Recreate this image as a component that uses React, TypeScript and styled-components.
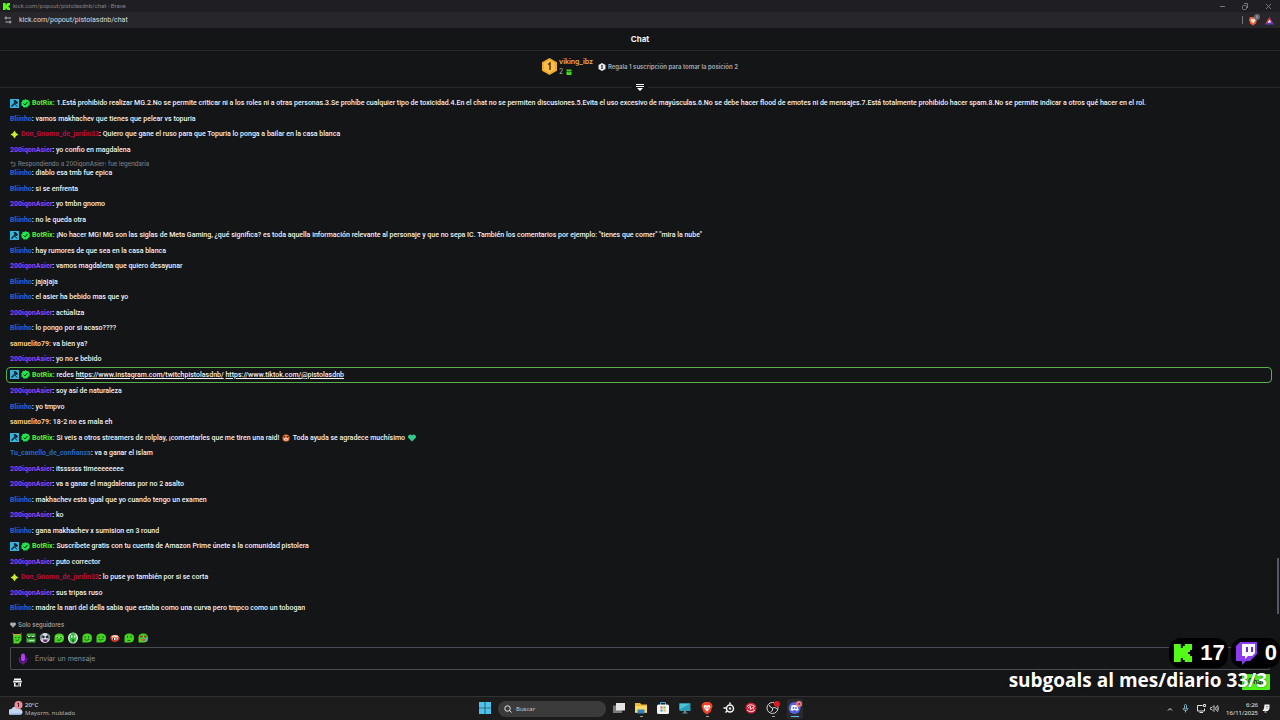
import React from "react";
import styled, { createGlobalStyle } from "styled-components";

const GlobalStyle = createGlobalStyle`
  * { box-sizing: border-box; }
  body { margin: 0; background: #141517; }
  button, input { font: inherit; color: inherit; border: 0; background: none; padding: 0; margin: 0; }
  svg { display: block; flex: none; }
`;

const Page = styled.div`
  position: relative;
  display: flex;
  flex-direction: column;
  min-height: 100vh;
  background: #141517;
  color: #f2f2f3;
  font-family: Inter, "Liberation Sans", sans-serif;
  font-size: 7px;
  line-height: 10px;
`;

/* ---------- browser window ---------- */

const TitleBar = styled.header`
  display: flex;
  align-items: center;
  gap: 3px;
  height: 12px;
  padding: 0 8px 0 3px;
  background: #1f1e22;
  color: #828286;
  font-family: Roboto, sans-serif;
  font-size: 6px;
`;

const WindowButtons = styled.div`
  display: flex;
  gap: 15px;
  margin-left: auto;
`;

const WindowButton = styled.button`
  width: 8px;
  height: 8px;
  color: #77777b;
`;

const AddressBar = styled.div`
  display: flex;
  align-items: center;
  gap: 7px;
  height: 16px;
  padding: 0 6px 0 4px;
  background: #27272b;
  color: #dcdcdf;
  font-family: Roboto, sans-serif;
`;

const AddressInput = styled.input`
  flex: 1;
  min-width: 0;
  height: 12px;
  font-size: 7px;
  outline: 0;
`;

const Extensions = styled.div`
  display: flex;
  align-items: center;
  gap: 5px;
  height: 8px;
  padding-left: 5px;
  border-left: 1px solid #77777b;
`;

/* ---------- chat head ---------- */

const ChatTitle = styled.h1`
  display: flex;
  align-items: center;
  justify-content: center;
  height: 23px;
  margin: 0;
  border-bottom: 1px solid #26282b;
  font-size: 8px;
  font-weight: 700;
`;

const Leaderboard = styled.section`
  display: flex;
  align-items: center;
  justify-content: center;
  gap: 5px;
  height: 31px;
`;

const Leader = styled.div`
  display: flex;
  align-items: center;
  gap: 2px;
`;

const LeaderName = styled.div`
  color: #e9ac62;
  font-size: 7px;
  font-weight: 600;
`;

const LeaderCount = styled.div`
  display: flex;
  align-items: center;
  gap: 3px;
  color: #a6abb0;
`;

const GiftHint = styled.div`
  display: flex;
  align-items: center;
  gap: 2px;
  color: #a9adb2;
  font-size: 6px;
  font-weight: 600;
`;

const Collapse = styled.div`
  display: flex;
  align-items: center;
  gap: 4px;
  height: 10px;

  &::before,
  &::after {
    content: "";
    flex: 1;
    height: 1px;
    background: #26282b;
  }
`;

const CollapseButton = styled.button`
  width: 8px;
  height: 8px;
`;

/* ---------- messages ---------- */

const MessageArea = styled.div`
  display: flex;
  flex: 1;
`;

const MessageList = styled.ol`
  display: flex;
  flex: 1;
  flex-direction: column;
  justify-content: space-between;
  min-width: 0;
  margin: 0;
  padding: 6px 6px 1px 10px;
  list-style: none;
`;

const Message = styled.li<{ $pinned?: boolean }>`
  font-family: Roboto, "Liberation Sans", sans-serif;
  font-size: 7px;
  font-weight: 500;
  line-height: 10px;
  ${(p) =>
    p.$pinned &&
    `
    margin: -3px -1px -2px -4px;
    padding: 2px 3px;
    border: 1px solid #5cb04c;
    border-radius: 4px;
  `}
`;

const Quote = styled.div`
  display: flex;
  align-items: center;
  gap: 2px;
  height: 8px;
  color: #7b7e82;
  font-family: Inter, sans-serif;
  font-size: 6px;
  font-weight: 500;
  line-height: 8px;
`;

const Line = styled.div`
  display: flex;
  align-items: center;
  gap: 2px;
  min-height: 10px;
`;

const Body = styled.span`
  white-space: pre-wrap;
`;

const User = styled.span<{ $color: string }>`
  color: ${(p) => p.$color};
  font-weight: 700;
`;

const Colon = styled.span<{ $color?: string }>`
  color: ${(p) => p.$color || "inherit"};
  font-weight: 700;
`;

const ChatLink = styled.a`
  color: inherit;
  text-decoration: underline;
`;

const Emoji = styled.span`
  display: inline-block;
  margin: 0 1px;
  vertical-align: -2px;
`;

const ScrollTrack = styled.div`
  display: flex;
  align-items: flex-end;
  width: 3px;
`;

const ScrollThumb = styled.div`
  width: 2px;
  height: 56px;
  background: #55585c;
`;

/* ---------- composer ---------- */

const Composer = styled.form`
  display: flex;
  flex-direction: column;
  padding: 5px 10px 6px;
`;

const FollowersOnly = styled.div`
  display: flex;
  align-items: center;
  gap: 2px;
  height: 12px;
  color: #a9acb0;
  font-size: 6px;
  font-weight: 500;
`;

const EmoteBar = styled.div`
  display: flex;
  gap: 2px;
  height: 16px;
  padding: 1px;
`;

const EmoteButton = styled.button`
  width: 12px;
  height: 12px;
`;

const MessageBox = styled.label`
  display: flex;
  align-items: center;
  gap: 7px;
  height: 23px;
  padding: 0 7px;
  border: 1px solid #494d52;
  border-radius: 1px;
`;

const MessageInput = styled.input`
  flex: 1;
  min-width: 0;
  font-size: 7px;
  outline: 0;

  &::placeholder { color: #8b8e92; opacity: 1; }
`;

const ComposerActions = styled.div`
  display: flex;
  align-items: center;
  justify-content: space-between;
  height: 16px;
  margin-top: 4px;
  padding-left: 3px;
`;

const ShopButton = styled.button`
  width: 9px;
  height: 9px;
`;

const SendButton = styled.button`
  width: 28px;
  height: 16px;
  border-radius: 1px;
  background: #4df51a;
  color: #14301a;
  font-size: 7px;
  font-weight: 600;
`;

/* ---------- stream overlay ---------- */

const Overlay = styled.aside`
  position: absolute;
  right: 0;
  bottom: 27px;
  display: flex;
  flex-direction: column;
  align-items: flex-end;
  pointer-events: none;
`;

const Counters = styled.div`
  display: flex;
  gap: 3px;
`;

const Counter = styled.div`
  display: flex;
  align-items: center;
  gap: 8px;
  height: 30px;
  padding: 0 3px 0 5px;
  border-radius: 12px;
  background: #000;
  color: #fff;
  font-family: "Liberation Sans", sans-serif;
  font-size: 22px;
  font-weight: 700;
  line-height: 30px;
`;

const Goal = styled.div`
  padding-right: 13px;
  color: #fff;
  font-family: "Open Sans", sans-serif;
  font-size: 19px;
  font-weight: 700;
  line-height: 25px;
  text-shadow: 0 0 2px #00000099;
`;

/* ---------- taskbar ---------- */

const Taskbar = styled.footer`
  display: grid;
  grid-template-columns: 1fr auto 1fr;
  align-items: center;
  height: 24px;
  border-top: 1px solid #313131;
  background: #1c1c1c;
  color: #e8e8e8;
  font-family: "Noto Sans", sans-serif;
  font-size: 6px;
  line-height: 8px;
`;

const Weather = styled.div`
  display: flex;
  align-items: center;
  gap: 2px;
  padding-left: 9px;
`;

const Dim = styled.div`
  color: #b4b4b4;
`;

const Apps = styled.nav`
  display: flex;
  align-items: center;
  gap: 6px;
`;

const Search = styled.label`
  display: flex;
  align-items: center;
  gap: 4px;
  width: 108px;
  height: 16px;
  margin: 0 -1px;
  padding: 0 6px;
  border-radius: 8px;
  background: #3b3b3b;
  font-size: 7px;
`;

const SearchInput = styled.input`
  width: 80px;
  outline: 0;
  font-size: 6px;
  &::placeholder { color: #c9c9c9; opacity: 1; }
`;

const AppButton = styled.button<{ $active?: boolean; $open?: boolean }>`
  display: flex;
  flex-direction: column;
  align-items: center;
  justify-content: center;
  width: 16px;
  height: 20px;
  border-radius: 2px;
  background: ${(p) => (p.$active ? "#2a2a2c" : "none")};

  &::after {
    content: "";
    width: ${(p) => (p.$active ? 8 : 3)}px;
    height: 1px;
    margin-top: 1px;
    background: ${(p) => (p.$active ? "#5cc0f5" : p.$open ? "#a0a0a0" : "transparent")};
  }
`;

const Tray = styled.div`
  display: flex;
  align-items: center;
  justify-content: flex-end;
  gap: 4px;
  padding-right: 10px;
`;

const TrayButton = styled.button<{ $gap?: number }>`
  margin-right: ${(p) => p.$gap || 0}px;
`;

const Clock = styled.time`
  margin: 0 0 0 3px;
  text-align: right;
`;

/* ---------- drawings ---------- */

const KickLogo = ({ size }: { size: number }) => (
  <svg width={size} height={size} viewBox="0 0 9 9" fill="#53fc18">
    <path d="M0 0h3.400v2h1V1h1V0H9v3H8v1H7v1h1v1h1v3H5.400V8h-1V7h-1v2H0z" />
  </svg>
);

const TwitchLogo = () => (
  <svg width="21" height="23" viewBox="0 0 21 23">
    <path d="M4 0h17v12l-7 7h-4l-4 4v-4H0V4z" fill="#8b3cf0" />
    <path d="M6 2h13v9l-3 3h-4l-3 3v-3H6z" fill="#fff" />
    <path d="M10 5h2v5h-2zM15 5h2v5h-2z" fill="#6f2bd0" />
  </svg>
);

const ModBadge = () => (
  <svg width="9" height="9" viewBox="0 0 18 18">
    <rect width="18" height="18" fill="#35b3dc" />
    <path d="M7 3l4-1 5 5-2 3-3-1-7 7-2-2 7-7z" fill="#10222c" />
    <path d="M10 10l4 5" stroke="#10222c" strokeWidth="2" />
  </svg>
);

const VerifiedBadge = () => (
  <svg width="9" height="9" viewBox="0 0 18 18">
    <path
      d="M9 0l2.500 2 3.200-.6 1 3.200L18 7l-1 2.500.5 3-3 1.200L12.500 17 9 16.500 5.500 17.500l-1.800-3L.5 13l.8-3.300L0 7l2.500-2L3.300 1.500l3.300.4z"
      fill="#1fe648"
    />
    <path d="M5 9l3 3 5-6" fill="none" stroke="#0c2c14" strokeWidth="2" />
  </svg>
);

const VipBadge = () => (
  <svg width="9" height="9" viewBox="0 0 18 18">
    <path d="M9 1l3 5 5 3-5 3-3 5-3-5-5-3 5-3z" fill="#c6ef2c" />
  </svg>
);

const StarEyes = () => (
  <svg width="8" height="8" viewBox="0 0 16 16">
    <circle cx="8" cy="8" r="7" fill="#f0803a" />
    <path d="M2 4h5l-2 4zM9 4h5l-3 4z" fill="#7a1c20" />
    <path d="M4 9h8a4 4 0 0 1-8 0z" fill="#fff" />
    <path d="M5 11h6a4 3 0 0 1-6 0z" fill="#b0202c" />
  </svg>
);

const GreenHeart = () => (
  <svg width="8" height="8" viewBox="0 0 16 16">
    <path d="M8 15L1 8a4.200 4.200 0 0 1 7-5 4.200 4.200 0 0 1 7 5z" fill="#2fc98a" />
  </svg>
);

const Blob = ({ children, base = "#45d51e" }: { children?: React.ReactNode; base?: string }) => (
  <svg width="12" height="12" viewBox="0 0 24 24">
    <path d="M3 11C3 5 7 3 13 3s9 3 9 9-3 9-9 9H3z" fill={base} />
    {children}
  </svg>
);

const dark = "#1c6a1c";

const emotes: { name: string; art: React.ReactNode }[] = [
  {
    name: "Angel",
    art: (
      <svg width="12" height="12" viewBox="0 0 24 24">
        <path d="M4 5h17v11l-5 7H5z" fill="#45d51e" />
        <path d="M2 1l4 3h12l4-3-3 5H5z" fill="#d89a4a" />
        <path d="M8 11h3M14 11h4M9 16q4 3 7-1" stroke={dark} strokeWidth="2" fill="none" />
      </svg>
    ),
  },
  {
    name: "Cool",
    art: (
      <svg width="12" height="12" viewBox="0 0 24 24">
        <path d="M4 3h17v18H3V8z" fill="#45b53a" />
        <path d="M3 8h18v5H5z" fill="#17361c" />
        <path d="M6 9h5M13 9h6M8 17h10" stroke="#c8e9cc" strokeWidth="2" />
      </svg>
    ),
  },
  {
    name: "Clown",
    art: (
      <svg width="12" height="12" viewBox="0 0 24 24">
        <circle cx="12" cy="12" r="10" fill="#d9dce6" />
        <path d="M1 8l5-5 3 5-5 8zM23 8l-5-5-3 5 5 8z" fill="#6c8f86" />
        <circle cx="9" cy="10" r="2.500" fill="#29243c" />
        <circle cx="16" cy="10" r="2.500" fill="#29243c" />
        <path d="M7 15h11l-3 5h-5z" fill="#6a2d66" />
      </svg>
    ),
  },
  {
    name: "Smirk",
    art: (
      <Blob>
        <path d="M6 9h5v3H6zM13 9h6v3h-6z" fill="#c6f7b4" />
        <path d="M7 11h3M14 11h4M8 16q4 2 8-1" stroke={dark} strokeWidth="2" fill="none" />
      </Blob>
    ),
  },
  {
    name: "Shock",
    art: (
      <svg width="12" height="12" viewBox="0 0 24 24">
        <ellipse cx="12" cy="12" rx="10" ry="11" fill="#dff3e2" />
        <ellipse cx="12" cy="12" rx="7" ry="10" fill="#2fbf3a" />
        <path d="M8 7h3v4H8zM14 7h3v4h-3z" fill="#fff" />
        <ellipse cx="12" cy="17" rx="2" ry="3" fill={dark} />
      </svg>
    ),
  },
  {
    name: "Happy",
    art: (
      <Blob>
        <path d="M8 8v4M15 8v4M7 15q5 4 10-1" stroke={dark} strokeWidth="2" fill="none" />
      </Blob>
    ),
  },
  {
    name: "Calm",
    art: (
      <Blob>
        <path d="M6 10h4M14 10h4M7 15q5 3 10-1" stroke={dark} strokeWidth="2" fill="none" />
      </Blob>
    ),
  },
  {
    name: "Mouth",
    art: (
      <svg width="12" height="12" viewBox="0 0 24 24">
        <path d="M2 12q3-8 9-6 7-2 11 6-3 8-10 8T2 12z" fill="#c93a28" />
        <path d="M4 9q8-6 16 0l-3 2H7z" fill="#f3d9c0" />
        <path d="M6 12h12l-2 4H8z" fill="#fff" />
        <path d="M9 12v4M14 12v4" stroke="#401414" strokeWidth="2" />
      </svg>
    ),
  },
  {
    name: "Think",
    art: (
      <Blob>
        <path d="M9 7v5M16 7v5M9 17h6" stroke={dark} strokeWidth="2" fill="none" />
      </Blob>
    ),
  },
  {
    name: "Tears",
    art: (
      <Blob>
        <path d="M6 7h5v4H6zM14 7h5v4h-5z" fill="#7c4a1c" />
        <path d="M9 14h8l-2 4h-4z" fill="#e04a4a" />
        <path d="M17 13h4v5h-4z" fill="#3aa9e8" />
      </Blob>
    ),
  },
];

/* ---------- data ---------- */

const colors = {
  BotRix: "#4ff03a",
  Bliinho: "#2566c8",
  "200iqonAsier": "#9744ee",
  samuelito79: "#f0c88c",
  Don_Gnomo_de_jardin33: "#b80d3c",
  Tu_camello_de_confianza: "#2566c0",
};

type Name = keyof typeof colors;
type Entry = { user: Name; text: React.ReactNode; reply?: string; pinned?: boolean };

const B: Name = "Bliinho";
const A: Name = "200iqonAsier";
const R: Name = "BotRix";
const S: Name = "samuelito79";
const D: Name = "Don_Gnomo_de_jardin33";

const messages: Entry[] = [
  {
    user: R,
    text: "1.Está prohibido realizar MG.2.No se permite criticar ni a los roles ni a otras personas.3.Se prohíbe cualquier tipo de toxicidad.4.En el chat no se permiten discusiones.5.Evita el uso excesivo de mayúsculas.6.No se debe hacer flood de emotes ni de mensajes.7.Está totalmente prohibido hacer spam.8.No se permite indicar a otros qué hacer en el rol.",
  },
  { user: B, text: "vamos makhachev que tienes que pelear vs topuria" },
  { user: D, text: "Quiero que gane el ruso para que Topuria lo ponga a bailar en la casa blanca" },
  { user: A, text: "yo confio en magdalena" },
  { user: B, text: "diablo esa tmb fue epica", reply: "Respondiendo a 200iqonAsier: fue legendaria" },
  { user: B, text: "si se enfrenta" },
  { user: A, text: "yo tmbn gnomo" },
  { user: B, text: "no le queda otra" },
  {
    user: R,
    text: '¡No hacer MG! MG son las siglas de Meta Gaming, ¿qué significa? es toda aquella información relevante al personaje y que no sepa IC. También los comentarios por ejemplo: "tienes que comer" "mira la nube"',
  },
  { user: B, text: "hay rumores de que sea en la casa blanca" },
  { user: A, text: "vamos magdalena que quiero desayunar" },
  { user: B, text: "jajajaja" },
  { user: B, text: "el asier ha bebido mas que yo" },
  { user: A, text: "actúaliza" },
  { user: B, text: "lo pongo por si acaso????" },
  { user: S, text: "va bien ya?" },
  { user: A, text: "yo no e bebido" },
  {
    user: R,
    pinned: true,
    text: (
      <>
        redes{" "}
        <ChatLink href="https://www.instagram.com/twitchpistolasdnb/">
          https://www.instagram.com/twitchpistolasdnb/
        </ChatLink>{" "}
        <ChatLink href="https://www.tiktok.com/@pistolasdnb">https://www.tiktok.com/@pistolasdnb</ChatLink>
      </>
    ),
  },
  { user: A, text: "soy así de naturaleza" },
  { user: B, text: "yo tmpvo" },
  { user: S, text: "18-2 no es mala eh" },
  {
    user: R,
    text: (
      <>
        Si veis a otros streamers de rolplay, ¡comentarles que me tiren una raid!{" "}
        <Emoji><StarEyes /></Emoji> Toda ayuda se agradece muchísimo <Emoji><GreenHeart /></Emoji>
      </>
    ),
  },
  { user: "Tu_camello_de_confianza", text: "va a ganar el islam" },
  { user: A, text: "itssssss timeeeeeeee" },
  { user: A, text: "va a ganar el magdalenas por no 2 asalto" },
  { user: B, text: "makhachev esta igual que yo cuando tengo un examen" },
  { user: A, text: "ko" },
  { user: B, text: "gana makhachev x sumision en 3 round" },
  { user: R, text: "Suscríbete gratis con tu cuenta de Amazon Prime únete a la comunidad pistolera" },
  { user: A, text: "puto corrector" },
  { user: D, text: "lo puse yo también por si se corta" },
  { user: A, text: "sus tripas ruso" },
  { user: B, text: "madre la nari del della sabia que estaba como una curva pero tmpco como un tobogan" },
];

const ChatMessage = ({ user, text, reply, pinned }: Entry) => (
  <Message $pinned={pinned}>
    {reply && (
      <Quote>
        <svg width="6" height="6" viewBox="0 0 12 12" fill="none" stroke="currentColor" strokeWidth="1.500">
          <path d="M4 1L1.500 3.500 4 6M2 3.500h8V10H3" />
        </svg>
        {reply}
      </Quote>
    )}
    <Line>
      {user === R && <ModBadge />}
      {user === R && <VerifiedBadge />}
      {user === D && <VipBadge />}
      <Body>
        <User $color={colors[user]}>{user}</User>
        <Colon $color={user === R || user === S ? colors[user] : undefined}>:</Colon> {text}
      </Body>
    </Line>
  </Message>
);

const apps: { name: string; open?: boolean; active?: boolean; art: React.ReactNode }[] = [
  {
    name: "Vista de tareas",
    art: (
      <svg width="14" height="14" viewBox="0 0 28 28">
        <path d="M2 9h18v15H2z" fill="#777" />
        <path d="M8 4h18v15H8z" fill="#e4e4e4" />
      </svg>
    ),
  },
  {
    name: "Explorador",
    open: true,
    art: (
      <svg width="14" height="14" viewBox="0 0 28 28">
        <path d="M2 4h10l3 3h11v17H2z" fill="#f0b93a" />
        <path d="M2 10h24v12H2z" fill="#fbd968" />
        <path d="M7 17h14v8H7z" fill="#2d84c9" />
      </svg>
    ),
  },
  {
    name: "Store",
    art: (
      <svg width="14" height="14" viewBox="0 0 28 28">
        <path d="M9 8V3h10v5" fill="none" stroke="#3ca6dd" strokeWidth="2" />
        <rect x="2" y="7" width="24" height="19" rx="3" fill="#f2f4f6" />
        <path d="M9 11h4v4H9z" fill="#e4543a" />
        <path d="M15 11h4v4h-4z" fill="#6cb33f" />
        <path d="M9 17h4v4H9z" fill="#2b98d8" />
        <path d="M15 17h4v4h-4z" fill="#edb526" />
      </svg>
    ),
  },
  {
    name: "Escritorio",
    art: (
      <svg width="14" height="14" viewBox="0 0 28 28">
        <path d="M3 5h22v15H3z" fill="#2d9cb8" />
        <path d="M3 5h22L3 17z" fill="#4cc4d8" />
        <path d="M12 20h4v3h3v2H9v-2h3z" fill="#6c8c98" />
      </svg>
    ),
  },
  {
    name: "Brave",
    open: true,
    art: (
      <svg width="14" height="14" viewBox="0 0 28 28">
        <path d="M9 2h10l5 4 1 5-4 11-7 5-7-5L3 11l1-5z" fill="#ee4327" />
        <path d="M9 8l5 1 5-1 2 4-4 6-3 3-3-3-4-6z" fill="#fff" />
        <path d="M10 11l3 2-1 4zM18 11l-3 2 1 4z" fill="#ee4327" />
      </svg>
    ),
  },
  {
    name: "SteelSeries",
    art: (
      <svg width="14" height="14" viewBox="0 0 28 28" fill="none" stroke="#f4f4f4">
        <circle cx="16" cy="15" r="7" strokeWidth="3" />
        <circle cx="16" cy="15" r="2" fill="#f4f4f4" />
        <path d="M16 3v4M3 14h6M7 23l3-3" strokeWidth="3" />
      </svg>
    ),
  },
  {
    name: "Monitor",
    art: (
      <svg width="14" height="14" viewBox="0 0 28 28">
        <circle cx="14" cy="14" r="11" fill="#d21f35" />
        <path d="M6 11q8-7 16 0M6 18q8 7 16 0M8 14l5-3v6l6-5v5" fill="none" stroke="#ffd5d8" strokeWidth="2" />
      </svg>
    ),
  },
  {
    name: "OBS",
    open: true,
    art: (
      <svg width="14" height="14" viewBox="0 0 28 28">
        <circle cx="13" cy="14" r="11" fill="#191919" stroke="#d6d6d6" strokeWidth="2" />
        <path d="M13 14q-6-1-6-6M13 14q5-3 9 2M13 14q2 6-4 8" fill="none" stroke="#d6d6d6" strokeWidth="2" />
        <circle cx="22" cy="6" r="6" fill="#e01822" />
      </svg>
    ),
  },
  {
    name: "Discord",
    active: true,
    art: (
      <svg width="14" height="14" viewBox="0 0 28 28">
        <circle cx="13" cy="14" r="12" fill="#5462e8" />
        <path d="M7 9l4-1h4l4 1 2 9-4 2-2-2h-4l-2 2-4-2z" fill="#fff" />
        <circle cx="11" cy="14" r="1.800" fill="#5462e8" />
        <circle cx="16" cy="14" r="1.800" fill="#5462e8" />
        <circle cx="22" cy="6" r="6" fill="#f08088" />
        <path d="M19 6h6M23 4v4" stroke="#5c2030" strokeWidth="1.500" />
      </svg>
    ),
  },
];

export default function App() {
  return (
    <Page>
      <GlobalStyle />
      <TitleBar>
        <KickLogo size={7} />
        <span>kick.com/popout/pistolasdnb/chat - Brave</span>
        <WindowButtons>
          <WindowButton aria-label="Minimizar">
            <svg width="8" height="8" stroke="currentColor"><path d="M2 4.500h5" /></svg>
          </WindowButton>
          <WindowButton aria-label="Restaurar">
            <svg width="8" height="8" stroke="currentColor" fill="none">
              <rect x="1.500" y="3.500" width="4" height="4" rx="1" />
              <path d="M3 1.500h3.500V6" />
            </svg>
          </WindowButton>
          <WindowButton aria-label="Cerrar">
            <svg width="8" height="8" stroke="currentColor"><path d="M2 2l5 5M7 2L2 7" /></svg>
          </WindowButton>
        </WindowButtons>
      </TitleBar>
      <AddressBar>
        <svg width="8" height="8" viewBox="0 0 16 16" fill="none" stroke="#b8b8bc" strokeWidth="2">
          <path d="M7 4h7M3 12h6" />
          <circle cx="4" cy="4" r="2" />
          <circle cx="12" cy="12" r="2" />
        </svg>
        <AddressInput aria-label="Dirección" defaultValue="kick.com/popout/pistolasdnb/chat" />
        <Extensions>
          <svg width="12" height="12" viewBox="0 0 24 24">
            <path d="M4 6h11l3 5-2 8-6 4-6-4-2-8z" fill="#ee5a36" />
            <path d="M6 9l4 1 4-1 1 4-5 6-5-6z" fill="#ffe4da" />
            <circle cx="18" cy="6" r="6" fill="#66686c" />
            <path d="M18 3v6" stroke="#c8c8cc" strokeWidth="1.500" />
          </svg>
          <svg width="9" height="9" viewBox="0 0 18 18">
            <path d="M9 1L0 17l9-5z" fill="#e8452c" />
            <path d="M9 1l9 16-9-5z" fill="#9a2a8c" />
            <path d="M0 17h18l-9-6z" fill="#5a3cc8" />
            <path d="M9 7l3.500 6h-7z" fill="#fff" />
          </svg>
        </Extensions>
      </AddressBar>

      <ChatTitle>Chat</ChatTitle>
      <Leaderboard>
        <Leader>
          <svg width="15" height="17" viewBox="0 0 15 17">
            <path d="M7.500 0L15 4.200v8.600L7.500 17 0 12.800V4.200z" fill="#f0a92c" />
            <path d="M7.500 2L13 5.200v6.600L7.500 15 2 11.800V5.200z" fill="#f8c04a" />
            <path d="M6 6.500l2-1.500v7" fill="none" stroke="#5a3208" strokeWidth="1.500" />
          </svg>
          <div>
            <LeaderName>viking_ibz</LeaderName>
            <LeaderCount>
              2
              <svg width="6" height="6" viewBox="0 0 12 12" fill="#3fdc22">
                <path d="M1 1h10v4H1zM1 6h10v6H1z" />
                <path d="M5 3h2v5H5z" fill="#208a18" />
              </svg>
            </LeaderCount>
          </div>
        </Leader>
        <GiftHint>
          <svg width="8" height="8" viewBox="0 0 16 16">
            <path d="M8 0l7 4v8l-7 4-7-4V4z" fill="#e9eaec" />
            <path d="M6 4h4v8H6z" fill="#5a5e63" />
            <path d="M7.500 6h1v4h-1z" fill="#e9eaec" />
          </svg>
          Regala 1 suscripción para tomar la posición 2
        </GiftHint>
      </Leaderboard>
      <Collapse>
        <CollapseButton aria-label="Ocultar clasificación">
          <svg width="8" height="8" viewBox="0 0 8 8" fill="#fff">
            <path d="M0 1h8v1H0zM0 3h8v1H0zM1 5h6L4 8z" />
          </svg>
        </CollapseButton>
      </Collapse>

      <MessageArea>
        <MessageList>
          {messages.map((m, i) => (
            <ChatMessage key={i} {...m} />
          ))}
        </MessageList>
        <ScrollTrack>
          <ScrollThumb />
        </ScrollTrack>
      </MessageArea>

      <Composer onSubmit={(e) => e.preventDefault()}>
        <FollowersOnly>
          <svg width="6" height="6" viewBox="0 0 16 16" fill="currentColor">
            <path d="M8 15L1 8a4.200 4.200 0 0 1 7-5 4.200 4.200 0 0 1 7 5z" />
          </svg>
          Solo seguidores
        </FollowersOnly>
        <EmoteBar>
          {emotes.map((e) => (
            <EmoteButton key={e.name} type="button" aria-label={e.name}>
              {e.art}
            </EmoteButton>
          ))}
        </EmoteBar>
        <MessageBox>
          <svg width="10" height="12" viewBox="0 0 20 24">
            <path d="M3 9v4a7 7 0 0 0 14 0V9M10 19v4" fill="none" stroke="#6a1a9c" strokeWidth="3" />
            <rect x="6" y="1" width="8" height="16" rx="4" fill="#b63cf0" />
          </svg>
          <MessageInput aria-label="Enviar un mensaje" placeholder="Enviar un mensaje" />
        </MessageBox>
        <ComposerActions>
          <ShopButton type="button" aria-label="Tienda">
            <svg width="9" height="9" viewBox="0 0 18 18" fill="#fff">
              <path d="M2 1h14v3H2zM1 5h16l1 4H0zM2 10h3v5h5v-5h6v7H2z" />
              <path d="M11 10h2v7h-2z" fill="#141517" />
            </svg>
          </ShopButton>
          <SendButton type="submit">Chat</SendButton>
        </ComposerActions>
      </Composer>

      <Taskbar>
        <Weather>
          <svg width="14" height="16" viewBox="0 0 28 32">
            <path d="M4 28a6 6 0 0 1 1-12 8 8 0 0 1 15 0 6 6 0 0 1 2 12z" fill="#c4d6f2" />
            <path d="M2 25h22v3H4z" fill="#8cacdf" />
            <circle cx="19" cy="8" r="8" fill="#ee8c9c" />
            <path d="M17 5l2-1v8" fill="none" stroke="#501c28" strokeWidth="2" />
          </svg>
          <div>
            <div>20°C</div>
            <Dim>Mayorm. nublado</Dim>
          </div>
        </Weather>
        <Apps>
          <AppButton aria-label="Inicio">
            <svg width="12" height="12" viewBox="0 0 12 12" fill="#4cc2ee">
              <path d="M0 0h5.700v5.700H0zM6.300 0H12v5.700H6.300zM0 6.300h5.700V12H0zM6.300 6.300H12V12H6.300z" />
            </svg>
          </AppButton>
          <Search>
            <svg width="8" height="8" viewBox="0 0 16 16" fill="none" stroke="#e8e8e8" strokeWidth="2">
              <circle cx="7" cy="7" r="5.500" />
              <path d="M11 11l4 4" />
            </svg>
            <SearchInput aria-label="Buscar" placeholder="Buscar" />
          </Search>
          {apps.map((a) => (
            <AppButton key={a.name} aria-label={a.name} $open={a.open} $active={a.active}>
              {a.art}
            </AppButton>
          ))}
        </Apps>
        <Tray>
          <TrayButton aria-label="Iconos ocultos" $gap={5}>
            <svg width="6" height="6" fill="none" stroke="#e8e8e8"><path d="M1 4.500l2-2 2 2" /></svg>
          </TrayButton>
          <TrayButton aria-label="Micrófono" $gap={4}>
            <svg width="7" height="9" viewBox="0 0 14 18" fill="none" stroke="#7fb2c4" strokeWidth="2">
              <rect x="5" y="1" width="4" height="9" rx="2" />
              <path d="M2 8a5 5 0 0 0 10 0M7 13v4" />
            </svg>
          </TrayButton>
          <TrayButton aria-label="Red">
            <svg width="9" height="9" viewBox="0 0 18 18" fill="none" stroke="#e0e0e0" strokeWidth="2">
              <path d="M11 3H1v11h14V9M5 17h7" />
              <path d="M13 1h4v4h-4z" />
            </svg>
          </TrayButton>
          <TrayButton aria-label="Volumen">
            <svg width="9" height="9" viewBox="0 0 18 18" fill="none" stroke="#e0e0e0" strokeWidth="1.500">
              <path d="M1 7h3l4-4v12l-4-4H1zM10 6q2 3 0 6M13 4q3 5 0 10M15 2q4 7 0 14" />
            </svg>
          </TrayButton>
          <Clock>
            <div>6:26</div>
            <div>16/11/2025</div>
          </Clock>
          <TrayButton aria-label="Notificaciones">
            <svg width="8" height="9" viewBox="0 0 16 18" fill="#f0f0f0">
              <path d="M5 1h10v8l-3 5H1l3-5zM5 15h4v2H5z" />
              <path d="M8 5h5M8 8h4" stroke="#555" />
            </svg>
          </TrayButton>
        </Tray>
      </Taskbar>

      <Overlay>
        <Counters>
          <Counter>
            <KickLogo size={18} />
            17
          </Counter>
          <Counter>
            <TwitchLogo />
            0
          </Counter>
        </Counters>
        <Goal>subgoals al mes/diario 33/3</Goal>
      </Overlay>
    </Page>
  );
}
